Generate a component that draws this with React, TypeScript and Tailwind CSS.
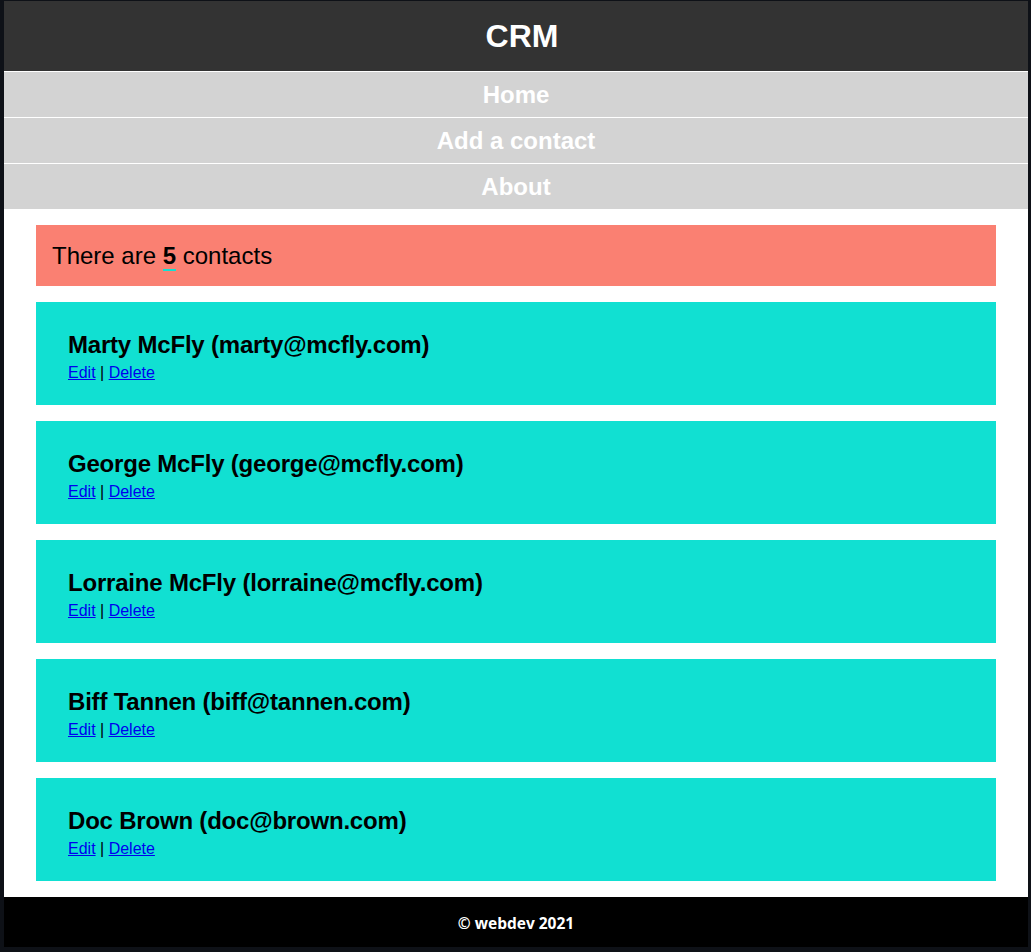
const contacts = [
  { name: 'Marty McFly', email: 'marty@mcfly.com' },
  { name: 'George McFly', email: 'george@mcfly.com' },
  { name: 'Lorraine McFly', email: 'lorraine@mcfly.com' },
  { name: 'Biff Tannen', email: 'biff@tannen.com' },
  { name: 'Doc Brown', email: 'doc@brown.com' },
];

const navLinks = ['Home', 'Add a contact', 'About'];

export default function App() {
  return (
    <div className="min-h-[952px] bg-[#0e1117] pl-1 pr-[3px] pt-px pb-[5px] font-['Liberation_Sans',Arial,sans-serif]">
      <div className="bg-white">
        <header className="h-[70px] bg-[#333333] flex items-center justify-center pl-3">
          <h1 className="text-[32px] font-bold text-white leading-none">CRM</h1>
        </header>

        <nav>
          {navLinks.map((label) => (
            <a
              key={label}
              href="#"
              className="flex h-[46px] items-center justify-center border-t border-white bg-[#d3d3d3] text-2xl font-bold text-white"
            >
              {label}
            </a>
          ))}
        </nav>

        <main className="flex flex-col gap-4 px-8 py-4">
          <div className="flex h-[61px] items-center bg-[#fa8072] px-4 text-2xl text-black">
            <p>
              There are <span className="border-b-2 border-[#11e0d2] font-bold">5</span> contacts
            </p>
          </div>

          {contacts.map((c) => (
            <div key={c.email} className="bg-[#11e0d2] px-8 pt-[29px] pb-[23px]">
              <h2 className="text-2xl font-bold leading-[28px] tracking-[-0.2px] text-black">
                {c.name} ({c.email})
              </h2>
              <div className="mt-[5px] text-base leading-[18px] text-black">
                <a href="#" className="text-[#0000ee] underline">Edit</a> |{' '}
                <a href="#" className="text-[#0000ee] underline">Delete</a>
              </div>
            </div>
          ))}
        </main>

        <footer className="flex h-[50px] items-center justify-center bg-black pt-1 font-['Open_Sans',sans-serif] text-[15.5px] font-bold text-white">
          © webdev 2021
        </footer>
      </div>
    </div>
  );
}
